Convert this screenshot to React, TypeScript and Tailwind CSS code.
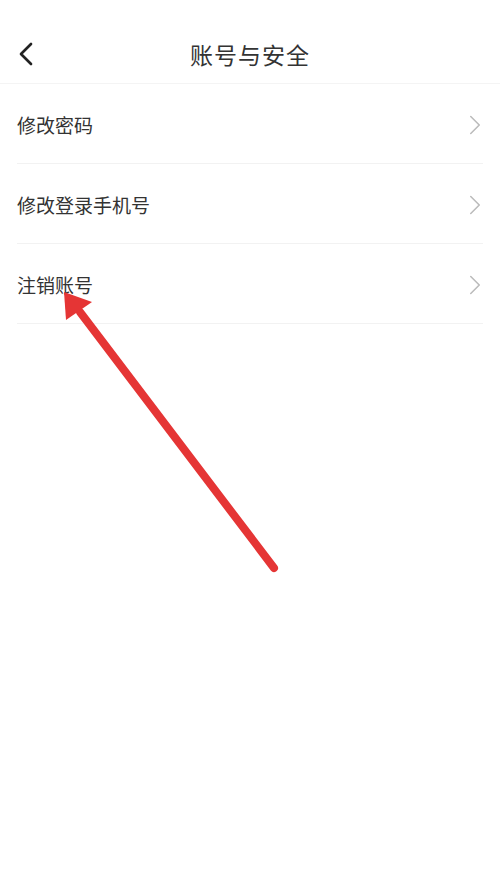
import { ChevronLeft, ChevronRight } from "lucide-react";

const items = ["修改密码", "修改登录手机号", "注销账号"];

export default function App() {
  return (
    <div
      className="relative w-[500px] h-[889px] bg-white overflow-hidden"
      style={{ fontFamily: '"Noto Sans CJK SC", "Noto Sans", sans-serif' }}
    >
      {/* Header */}
      <div className="relative flex items-center justify-center h-[84px] border-b border-[#f4f4f4]">
        <ChevronLeft
          size={40}
          strokeWidth={1.6}
          className="absolute left-[6px] top-[34px] text-[#222]"
        />
        <h1 className="text-[23px] text-[#333] mt-[26px] tracking-[1px]">账号与安全</h1>
      </div>

      {/* List */}
      <div className="px-[17px]">
        {items.map((label) => (
          <div
            key={label}
            className="flex items-center justify-between h-[80px] pt-[3px] border-b border-[#f2f2f2]"
          >
            <span className="text-[19px] text-[#333]">{label}</span>
            <ChevronRight size={34} strokeWidth={1.1} className="text-[#bbb] -mr-[9px]" />
          </div>
        ))}
      </div>

      {/* Red annotation arrow */}
      <svg
        className="absolute left-0 top-0 pointer-events-none"
        width="500"
        height="889"
        viewBox="0 0 500 889"
      >
        <line x1="274" y1="568" x2="80" y2="312" stroke="#e53535" strokeWidth="8" strokeLinecap="round" />
        <polygon points="64,292 92,302 66,320" fill="#e53535" />
      </svg>
    </div>
  );
}
